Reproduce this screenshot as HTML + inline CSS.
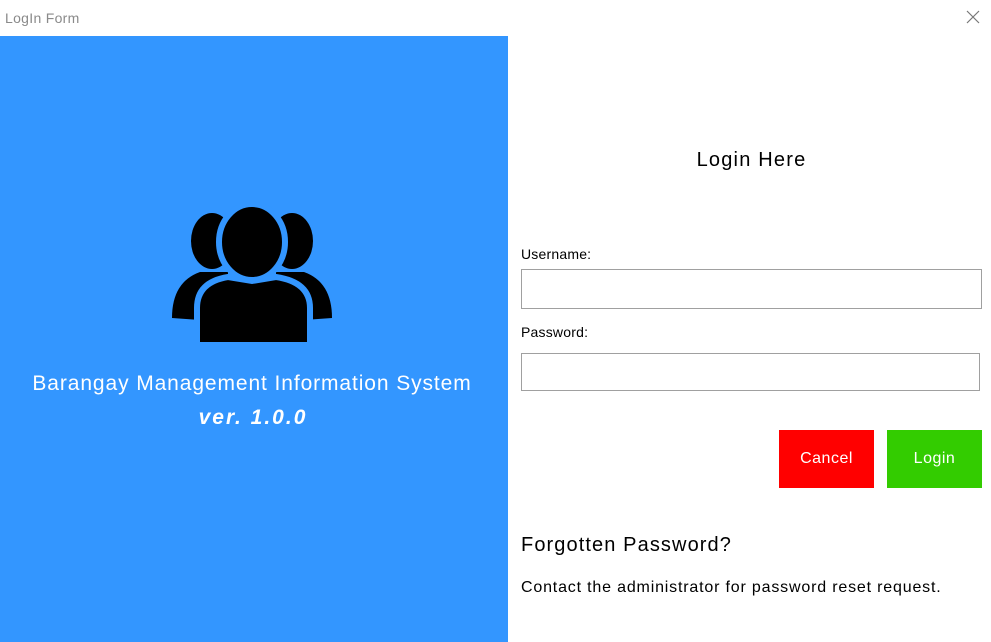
<!DOCTYPE html>
<html><head><meta charset="utf-8"><style>
*{margin:0;padding:0;box-sizing:border-box}
body{width:991px;height:642px;background:#fff;font-family:"Liberation Sans",sans-serif;position:relative;overflow:hidden}
.t{position:absolute;white-space:nowrap}
.left{position:absolute;left:0;top:36px;width:508px;height:606px;background:#3396ff}
.inp{position:absolute;border:1px solid #a0a0a0;background:#fff}
.btn{position:absolute;color:#fff;font-size:16px;display:flex;align-items:center;justify-content:center;letter-spacing:0.5px}
</style></head><body>
<div class="t" style="left:5px;top:10px;font-size:14px;color:#8a8a8a;letter-spacing:0.3px">LogIn Form</div>
<svg class="t" style="left:965px;top:9px" width="16" height="16"><path d="M2 2L14 14M14 2L2 14" stroke="#777" stroke-width="1.2"/></svg>
<div class="left"></div>
<svg class="t" style="left:0;top:0" width="508" height="642">
<g fill="#000">
<ellipse cx="212" cy="241" rx="21" ry="28"/>
<ellipse cx="292" cy="241" rx="21" ry="28"/>
<path d="M172 318 Q172 282 200 272 L228 272 L228 322 Z"/>
<path d="M332 318 Q332 282 304 272 L276 272 L276 322 Z"/>
</g>
<ellipse cx="252" cy="242" rx="33" ry="38" fill="#000" stroke="#3396ff" stroke-width="6"/>
<path d="M197 345 L197 308 Q197 282 228 277 L252 281 L276 277 Q310 282 310 308 L310 345 Z" fill="#000" stroke="#3396ff" stroke-width="6"/>
</svg>
<div class="t" style="left:0;width:504px;top:372px;text-align:center;color:#fff;font-size:21px;letter-spacing:0.9px">Barangay Management Information System</div>
<div class="t" style="left:0;width:506px;top:406px;text-align:center;color:#fff;font-size:21px;font-weight:bold;font-style:italic;letter-spacing:2px">ver. 1.0.0</div>
<div class="t" style="left:521px;width:461px;top:149px;text-align:center;font-size:20px;color:#000;letter-spacing:1.2px">Login Here</div>
<div class="t" style="left:521px;top:246px;font-size:14px;letter-spacing:0.2px">Username:</div>
<div class="inp" style="left:521px;top:269px;width:461px;height:40px"></div>
<div class="t" style="left:521px;top:324px;font-size:14px;letter-spacing:0.2px">Password:</div>
<div class="inp" style="left:521px;top:353px;width:459px;height:38px"></div>
<div class="btn" style="left:779px;top:430px;width:95px;height:58px;background:#ff0000">Cancel</div>
<div class="btn" style="left:887px;top:430px;width:95px;height:58px;background:#33cc00">Login</div>
<div class="t" style="left:521px;top:534px;font-size:20px;letter-spacing:1.1px">Forgotten Password?</div>
<div class="t" style="left:521px;top:579px;font-size:16px;letter-spacing:0.82px">Contact the administrator for password reset request.</div>
</body></html>
